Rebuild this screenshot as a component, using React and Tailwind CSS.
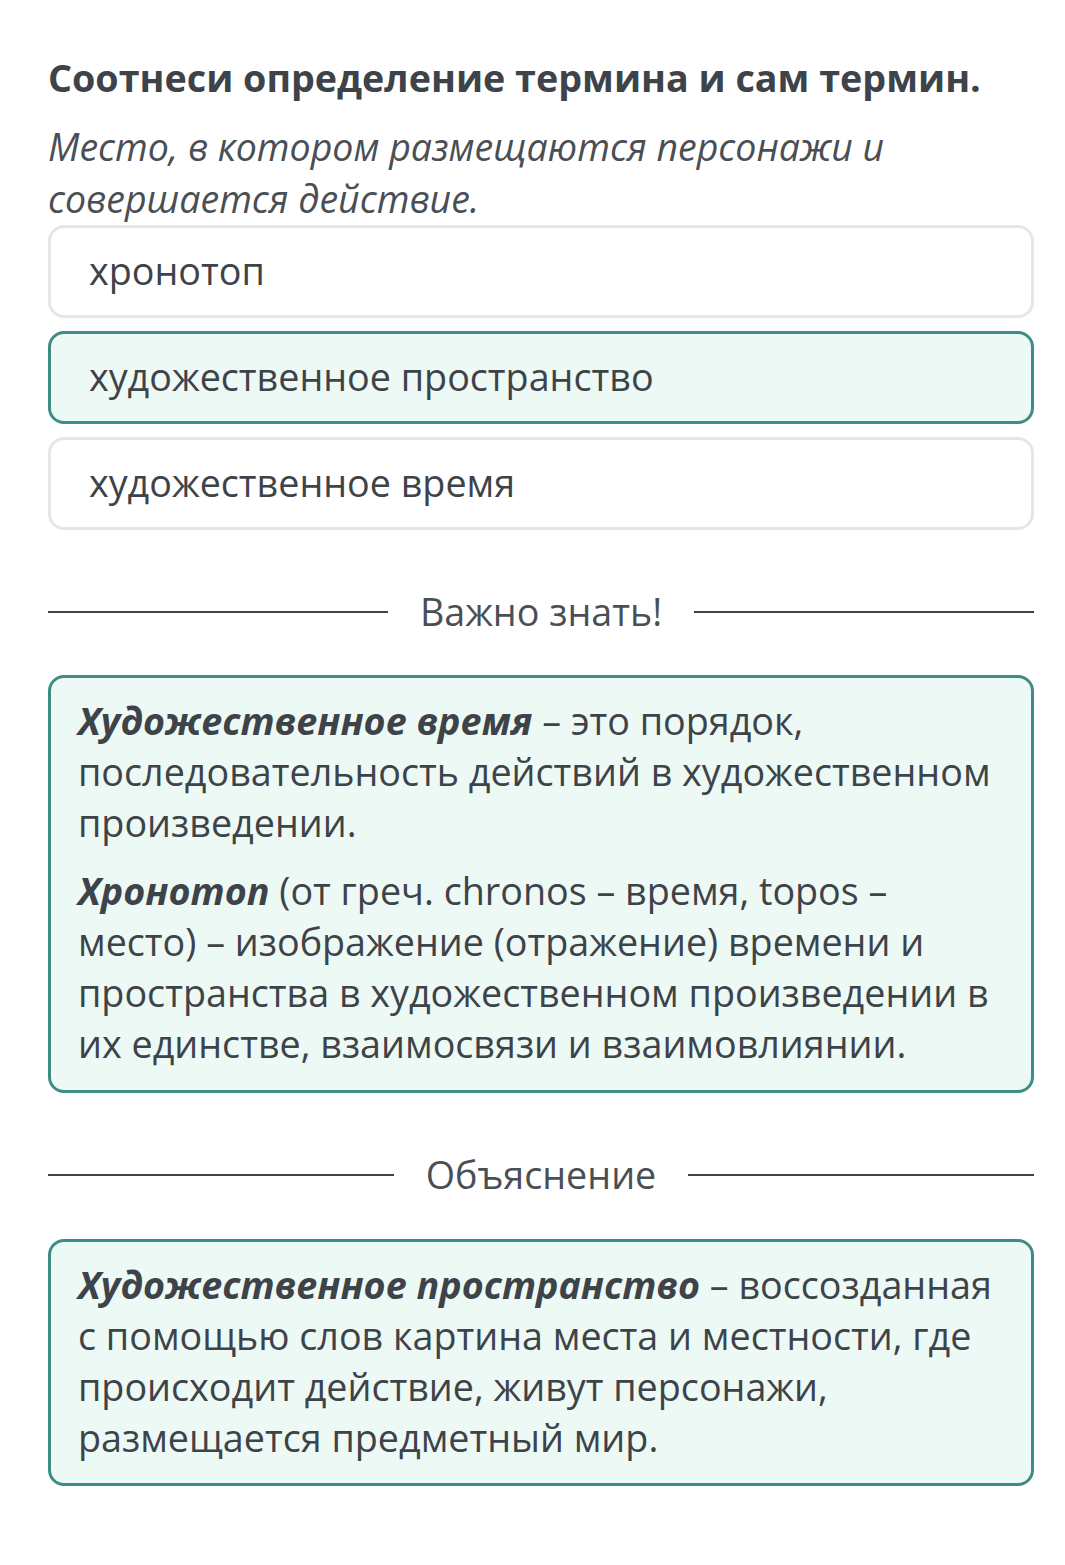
export default function App() {
    const options = [
        { label: "хронотоп", selected: false },
        { label: "художественное пространство", selected: true },
        { label: "художественное время", selected: false },
    ];

    return (
        <div
            className="min-h-[1565px] bg-white pl-[48px] pr-[31px] pt-[52px] text-[#3e4349]"
            style={{ fontFamily: '"Open Sans", sans-serif' }}
        >
            <h1 className="text-[37.7px] leading-[52px] font-bold">Соотнеси определение термина и сам термин.</h1>
            <p className="mt-[17px] text-[37.5px] leading-[52px] italic text-[#4a4f55]">
                Место, в котором размещаются персонажи и совершается действие.
            </p>

            <div className="flex flex-col gap-[13px]">
                {options.map((opt) => (
                    <div
                        key={opt.label}
                        className={
                            opt.selected
                                ? "h-[93px] rounded-[16px] border-[3px] border-[#3f8c84] bg-[#edf9f4] pl-[38px] flex items-center text-[37.7px]"
                                : "h-[93px] rounded-[16px] border-[3px] border-[#e4e6e7] bg-white pl-[38px] flex items-center text-[37.7px]"
                        }
                    >
                        {opt.label}
                    </div>
                ))}
            </div>

            <Divider className="mt-[56px]" title="Важно знать!" />

            <div className="mt-[37px] rounded-[16px] border-[3px] border-[#3f8c84] bg-[#edf9f4] px-[27px] pt-[17px] pb-[21px] text-[37.7px] leading-[51px]">
                <p>
                    <b className="italic">Художественное время</b> – это порядок, последовательность действий в художественном
                    произведении.
                </p>
                <p className="mt-[17px]">
                    <b className="italic">Хронотоп</b> (от греч. chronos – время, topos – место) – изображение (отражение)
                    времени и пространства в художественном произведении в их единстве, взаимосвязи и взаимовлиянии.
                </p>
            </div>

            <Divider className="mt-[56px]" title="Объяснение" />

            <div className="mt-[38px] rounded-[16px] border-[3px] border-[#3f8c84] bg-[#edf9f4] px-[27px] pt-[17px] pb-[20px] text-[37.7px] leading-[51px]">
                <p>
                    <b className="italic">Художественное пространство</b> – воссозданная с помощью слов картина места и
                    местности, где происходит действие, живут персонажи, размещается предметный мир.
                </p>
            </div>
        </div>
    );
}

function Divider({ title, className }) {
    return (
        <div className={"flex items-center h-[52px] " + className}>
            <div className="flex-1 h-[2px] bg-[#3e4349]" />
            <span className="px-[32px] text-[37.7px] text-[#4a4f55]">{title}</span>
            <div className="flex-1 h-[2px] bg-[#3e4349]" />
        </div>
    );
}
